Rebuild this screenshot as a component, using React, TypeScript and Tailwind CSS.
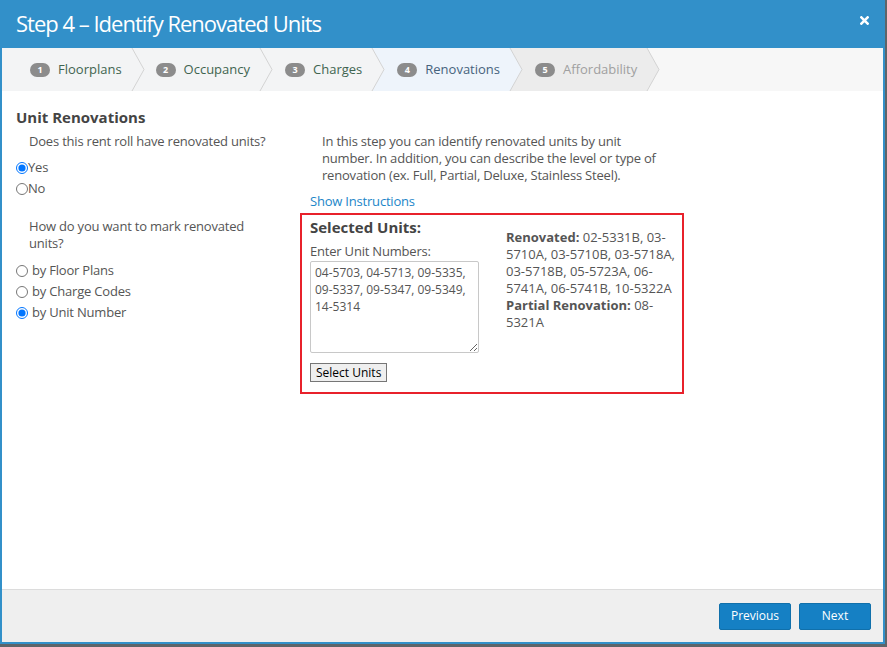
import React from "react";

const steps = [
  { n: 1, label: "Floorplans", bg: "#f3f4f5", text: "text-[#3f6450]", pad: "pl-[28px]" },
  { n: 2, label: "Occupancy", bg: "#f3f4f5", text: "text-[#3f6450]", pad: "pl-[11px]" },
  { n: 3, label: "Charges", bg: "#f3f4f5", text: "text-[#3f6450]", pad: "pl-[12px]" },
  { n: 4, label: "Renovations", bg: "#eef4fb", text: "text-[#46637d]", pad: "pl-[12px]" },
  { n: 5, label: "Affordability", bg: "#ececec", text: "text-[#a0a0a0]", pad: "pl-[12px]" },
];

function Chevron({ left, right }: { left: string; right: string }) {
  return (
    <svg width="14" height="43" viewBox="0 0 14 43" className="block shrink-0">
      <rect x="0" y="0" width="14" height="43" fill={right} />
      <polygon points="0,0 1,0 13,21.5 1,43 0,43" fill={left} />
      <polyline points="1,0 13,21.5 1,43" fill="none" stroke="#d3d3d3" strokeWidth="1" />
    </svg>
  );
}

function Radio({ checked, label, gap }: { checked?: boolean; label: string; gap?: boolean }) {
  return (
    <label className="flex h-[21px] items-center">
      <input type="radio" defaultChecked={checked} className="h-[12px] w-[12px]" name={label} />
      <span className={gap ? "ml-[4px]" : ""}>{label}</span>
    </label>
  );
}

export default function App() {
  return (
    <div className="h-[647px] w-[887px] overflow-hidden bg-[#5e6469] font-['Open_Sans',sans-serif] text-[13px] tracking-[-0.2px] text-[#555]">
      <div className="flex h-[644px] w-[885px] flex-col border-x-2 border-b-2 border-[#3290c9] bg-white">
        <div className="-mx-[2px] flex h-[48px] shrink-0 items-center justify-between bg-[#3290c9] pl-[16px] pr-[16px]">
          <h1 className="-mt-[2px] text-[22px] leading-none tracking-[-1px] text-white">
            Step 4 – Identify Renovated Units
          </h1>
          <svg width="9" height="9" viewBox="0 0 10 10" className="-mt-[7px]">
            <path d="M1.5 1.5 8.5 8.5M8.5 1.5 1.5 8.5" stroke="white" strokeWidth="2.8" strokeLinecap="square" />
          </svg>
        </div>

        <div className="flex h-[43px] shrink-0 bg-[#f7f7f7] tracking-normal">
          {steps.map((s, i) => (
            <React.Fragment key={s.n}>
              <div className={`flex items-center ${s.pad} pr-[9px]`} style={{ backgroundColor: s.bg }}>
                <span className="flex h-[14px] w-[20px] items-center justify-center rounded-full bg-[#8c8c8c] text-[9px] font-bold text-white">
                  {s.n}
                </span>
                <span className={`ml-[8px] ${s.text}`}>{s.label}</span>
              </div>
              <Chevron left={s.bg} right={i < steps.length - 1 ? steps[i + 1].bg : "#f7f7f7"} />
            </React.Fragment>
          ))}
        </div>

        <div className="flex flex-1 pl-[14px] pt-[16px]">
          <div className="w-[284px] shrink-0">
            <h3 className="text-[15px] font-bold leading-[20px] tracking-normal text-[#444]">Unit Renovations</h3>
            <p className="mt-[6px] pl-[13px] leading-[17px]">Does this rent roll have renovated units?</p>
            <div className="mt-[7px]">
              <Radio checked label="Yes" />
              <Radio label="No" />
            </div>
            <p className="mt-[19px] w-[250px] pl-[13px] leading-[17px]">
              How do you want to mark renovated units?
            </p>
            <div className="mt-[8px]">
              <Radio gap label="by Floor Plans" />
              <Radio gap label="by Charge Codes" />
              <Radio gap checked label="by Unit Number" />
            </div>
          </div>

          <div className="w-[384px]">
            <p className="mt-[26px] w-[367px] pl-[22px] leading-[17px]">
              In this step you can identify renovated units by unit number. In addition, you can describe the level or
              type of renovation (ex. Full, Partial, Deluxe, Stainless Steel).
            </p>
            <a className="mt-[9px] block pl-[10px] leading-[17px] text-[#1c86c8]">Show Instructions</a>
            <div className="mt-[3px] flex h-[181px] border-2 border-[#e8212b] pl-[8px] pt-[2px]">
              <div className="w-[196px]">
                <div className="text-[15px] font-bold leading-[20px] tracking-normal text-[#444]">Selected Units:</div>
                <div className="mt-[6px] leading-[17px]">Enter Unit Numbers:</div>
                <textarea
                  className="mt-[1px] block h-[92px] w-[169px] rounded-[2px] border border-[#c8c8c8] px-[4px] py-[2px] text-[12px] leading-[17px] tracking-normal text-[#555]"
                  defaultValue="04-5703, 04-5713, 09-5335, 09-5337, 09-5347, 09-5349, 14-5314"
                />
                <button className="mt-[10px] block h-[19px] border border-[#767676] bg-[#efefef] px-[5px] text-[12px] leading-[17px] tracking-normal text-black">
                  Select Units
                </button>
              </div>
              <div className="mt-[12px] w-[170px] leading-[17px] tracking-normal">
                <span className="font-bold">Renovated:</span> 02-5331B, 03-5710A, 03-5710B, 03-5718A, 03-5718B,
                05-5723A, 06-5741A, 06-5741B, 10-5322A <span className="font-bold">Partial Renovation:</span> 08-5321A
              </div>
            </div>
          </div>
        </div>

        <div className="flex h-[53px] shrink-0 items-center justify-end gap-[8px] border-t border-[#dcdcdc] bg-[#efefef] pr-[12px]">
          <button className="h-[27px] w-[72px] rounded-[2px] border border-[#1070ab] bg-[#1580c4] text-[12px] tracking-normal text-white">
            Previous
          </button>
          <button className="h-[27px] w-[72px] rounded-[2px] border border-[#1070ab] bg-[#1580c4] text-[12px] tracking-normal text-white">
            Next
          </button>
        </div>
      </div>
    </div>
  );
}
